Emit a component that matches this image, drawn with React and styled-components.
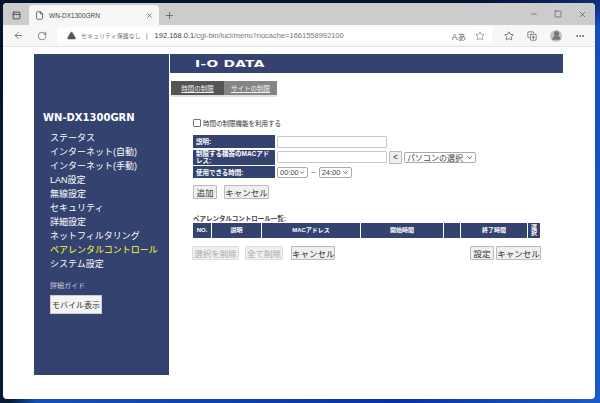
import styled, { createGlobalStyle } from 'styled-components'
import { ArrowLeft, RotateCw, File, Plus, X, Minus, Square, Star, MoreHorizontal, TriangleAlert, ChevronDown, PanelTop, CopyPlus, UserRound } from 'lucide-react'

const Global = createGlobalStyle`
  html, body {
    margin: 0;
    padding: 0;
    width: 600px;
    height: 403px;
    overflow: hidden;
  }
  body {
    font-family: "Liberation Sans", "Noto Sans CJK JP", sans-serif;
    background: linear-gradient(100deg, #071a33 0%, #071a33 12%, #1450b8 16%, #0a2fa8 70%, #1b5cc8 100%);
  }
`;

const Desktop = styled.div`
  width: 600px;
  height: 403px;
  padding: 3px 5px 4px 3px;
  box-sizing: border-box;
  background: linear-gradient(170deg, #04122c 0%, #04122c 16%, transparent 26%);
`;

const Browser = styled.div`
  width: 592px;
  height: 396px;
  border-radius: 4px;
  overflow: hidden;
  background: #fff;
  display: flex;
  flex-direction: column;
`;

const TabStrip = styled.div`
  height: 22px;
  flex-shrink: 0;
  background: #cccccc;
  display: flex;
  align-items: flex-end;
  color: #444;
`;

const TabIcon = styled.div`
  width: 26px;
  height: 20px;
  display: flex;
  align-items: center;
  justify-content: center;
  padding-left: 1px;
  box-sizing: border-box;
`;

const Tab = styled.div`
  width: 130px;
  height: 20px;
  background: #f7f7f7;
  border-radius: 4px 4px 0 0;
  display: flex;
  align-items: center;
  padding: 0 6px;
  box-sizing: border-box;
  gap: 5px;
  font-size: 6.5px;
  color: #444;
`;

const TabTitle = styled.span`
  flex: 1;
`;

const NewTab = styled.div`
  width: 20px;
  height: 20px;
  display: flex;
  align-items: center;
  justify-content: center;
`;

const WindowButtons = styled.div`
  margin-left: auto;
  height: 22px;
  display: flex;
  align-items: center;
  gap: 16px;
  padding-right: 8px;
  color: #555;
`;

const Toolbar = styled.div`
  height: 21px;
  flex-shrink: 0;
  background: #f7f7f7;
  border-bottom: 1px solid #e4e4e4;
  display: flex;
  align-items: center;
  color: #444;
`;

const NavButton = styled.div`
  width: 24px;
  display: flex;
  justify-content: center;
  margin-left: ${props => props.$left || 0}px;
`;

const AddressBar = styled.div`
  width: 133px;
  flex: 1;
  height: 17px;
  margin-left: 3px;
  background: #fff;
  border-radius: 3px;
  display: flex;
  align-items: center;
  padding: 0 7px 0 10px;
  font-size: 7.5px;
  color: #777;
  white-space: nowrap;
`;

const Warning = styled.span`
  font-size: 6px;
  color: #777;
  margin: 0 5px 0 5px;
`;

const Divider = styled.span`
  color: #888;
  margin-right: 7px;
`;

const Host = styled.span`
  color: #444;
`;

const AddressIcons = styled.div`
  margin-left: auto;
  display: flex;
  align-items: center;
  gap: 9px;
  color: #666;
`;

const ReadAloud = styled.span`
  font-size: 8.5px;
  color: #666;
`;

const ToolIcons = styled.div`
  display: flex;
  align-items: center;
  gap: 13px;
  padding: 0 10px 0 12px;
`;

const Avatar = styled.div`
  width: 12px;
  height: 12px;
  border-radius: 50%;
  background: #c4c4c4;
  color: #777;
  display: flex;
  align-items: center;
  justify-content: center;
  overflow: hidden;
`;

const Page = styled.div`
  flex: 1;
  padding: 7px 0 0 31px;
  display: flex;
  align-items: flex-start;
`;

const Sidebar = styled.nav`
  width: 135px;
  height: 321px;
  flex-shrink: 0;
  background: #344270;
  box-sizing: border-box;
  padding: 58px 0 0 9px;
  color: #fff;
`;

const Model = styled.h2`
  margin: 0 0 7px;
  font-family: "DejaVu Sans", sans-serif;
  font-size: 10px;
  line-height: 12px;
  font-weight: bold;
`;

const Menu = styled.ul`
  list-style: none;
  margin: 0;
  padding: 0 0 0 7px;
`;

const MenuItem = styled.li`
  font-size: 9px;
  line-height: 14px;
  white-space: nowrap;
  color: ${props => (props.$active ? '#ffff33' : '#fff')};
`;

const Guide = styled.div`
  margin: 9px 0 0 7px;
  font-size: 7px;
  line-height: 12px;
  color: #c5c9d8;
`;

const MobileButton = styled.button`
  display: block;
  margin: 3px 0 0 7px;
  width: 52px;
  height: 19px;
  padding: 0;
  border: 1px solid #ccc;
  background: #f4f4f4;
  color: #333;
  font-family: inherit;
  font-size: 8px;
`;

const Content = styled.main`
  width: 393px;
  margin-left: 1px;
`;

const Banner = styled.header`
  height: 19px;
  background: #344270;
  padding-left: 25px;
  display: flex;
  align-items: center;
`;

const Logo = styled.span`
  font-family: "DejaVu Sans", sans-serif;
  font-weight: bold;
  font-size: 9.5px;
  letter-spacing: 0.2px;
  color: #fff;
  display: inline-block;
  transform: scaleX(1.45);
  transform-origin: left center;
`;

const Tabs = styled.div`
  margin: 8px 0 0 1px;
  display: flex;
  border-bottom: 2px solid #e2e2e2;
  width: 106px;
`;

const PageTab = styled.a`
  width: 53px;
  height: 14px;
  font-size: 6.5px;
  line-height: 15px;
  text-align: center;
  color: #eee;
  text-decoration: underline;
  background: ${props => (props.$active ? '#555' : '#858585')};
`;

const Body = styled.div`
  padding: 20px 0 0 23px;
  color: #333;
`;

const CheckRow = styled.label`
  display: flex;
  align-items: center;
  height: 12px;
  font-size: 6.5px;
  gap: 2px;
`;

const Check = styled.span`
  width: 6px;
  height: 6px;
  border: 1px solid #777;
  border-radius: 1px;
  background: #fff;
`;

const Form = styled.div`
  margin-top: 6px;
  display: grid;
  grid-template-columns: 82px auto;
  row-gap: 1.5px;
  column-gap: 2px;
  justify-content: start;
`;

const Label = styled.div`
  background: #344270;
  color: #fff;
  font-size: 6.5px;
  font-weight: bold;
  line-height: 7px;
  padding: 0 3px;
  min-height: ${props => props.$h || 13}px;
  display: flex;
  align-items: center;
`;

const Field = styled.div`
  display: flex;
  align-items: center;
  gap: 2px;
  font-size: 8px;
`;

const Input = styled.div`
  width: 110px;
  height: 12px;
  box-sizing: border-box;
  border: 1px solid #c8c8c8;
  border-radius: 1px;
  background: #fff;
`;

const Select = styled.div`
  width: ${props => props.$w}px;
  height: 11px;
  box-sizing: border-box;
  border: 1px solid #aaa;
  border-radius: 2px;
  background: #fff;
  display: flex;
  align-items: center;
  justify-content: space-between;
  padding: 0 2px;
  font-size: ${props => props.$fs || 7.5}px;
  color: #444;
  white-space: nowrap;
`;

const Tilde = styled.span`
  margin: 0 1px;
  color: #555;
`;

const Button = styled.button`
  height: ${props => props.$h || 14}px;
  width: ${props => props.$w}px;
  margin-left: ${props => props.$left || 0}px;
  padding: 0;
  box-sizing: border-box;
  border: 1px solid ${props => (props.disabled ? '#dedede' : '#bbb')};
  border-radius: 1px;
  background: #efefef;
  color: ${props => (props.disabled ? '#aaa' : '#333')};
  font-family: inherit;
  font-size: 8.5px;
  white-space: nowrap;
`;

const ButtonRow = styled.div`
  display: flex;
  margin-top: 6.5px;
`;

const ListTitle = styled.div`
  margin-top: 15px;
  font-size: 6.5px;
  line-height: 9px;
  font-weight: bold;
  color: #444;
`;

const ListHead = styled.div`
  width: 347px;
  height: 15px;
  display: grid;
  grid-template-columns: 18px 49px 98px 82px 16px 66px 12px;
  column-gap: 1px;
`;

const HeadCell = styled.div`
  background: #344270;
  color: #fff;
  font-size: 6px;
  line-height: 6.5px;
  font-weight: bold;
  padding: 0 2px;
  display: flex;
  align-items: center;
  justify-content: center;
  text-align: center;
`;

const ListActions = styled.div`
  width: 349px;
  margin: 8px 0 0 -1px;
  display: flex;
`;

const RightActions = styled.div`
  margin-left: auto;
  display: flex;
  gap: 2px;
`;

const heads = ['NO.', '説明', 'MACアドレス', '開始時間', '', '終了時間', '選択']
const menu = ['ステータス', 'インターネット(自動)', 'インターネット(手動)', 'LAN設定', '無線設定', 'セキュリティ', '詳細設定', 'ネットフィルタリング', 'ペアレンタルコントロール', 'システム設定']

export default function App() {
  return (
    <>
      <Global />
      <Desktop>
        <Browser>
          <TabStrip>
            <TabIcon><PanelTop size={9} strokeWidth={2.4} /></TabIcon>
            <Tab>
              <File size={9} />
              <TabTitle>WN-DX1300GRN</TabTitle>
              <X size={7} strokeWidth={2.2} />
            </Tab>
            <NewTab><Plus size={11} strokeWidth={1.4} /></NewTab>
            <WindowButtons>
              <Minus size={8} />
              <Square size={8} />
              <X size={9} />
            </WindowButtons>
          </TabStrip>
          <Toolbar>
            <NavButton $left={3}><ArrowLeft size={11} strokeWidth={1.5} /></NavButton>
            <NavButton><RotateCw size={10} strokeWidth={1.5} /></NavButton>
            <AddressBar>
              <TriangleAlert size={9} fill="#555" stroke="#555" />
              <Warning>セキュリティ保護なし</Warning>
              <Divider>|</Divider>
              <Host>192.168.0.1</Host>/cgi-bin/luci/menu?nocache=1661558992100
              <AddressIcons>
                <ReadAloud>Aあ</ReadAloud>
                <Star size={10} strokeWidth={1.4} />
              </AddressIcons>
            </AddressBar>
            <ToolIcons>
              <Star size={10} strokeWidth={1.6} />
              <CopyPlus size={10} strokeWidth={1.6} />
              <Avatar><UserRound size={11} fill="#777" /></Avatar>
              <MoreHorizontal size={10} />
            </ToolIcons>
          </Toolbar>
          <Page>
            <Sidebar>
              <Model>WN-DX1300GRN</Model>
              <Menu>
                {menu.map((m, i) => <MenuItem key={m} $active={i === 8}>{m}</MenuItem>)}
              </Menu>
              <Guide>詳細ガイド</Guide>
              <MobileButton>モバイル表示</MobileButton>
            </Sidebar>
            <Content>
              <Banner><Logo>I-O DATA</Logo></Banner>
              <Tabs>
                <PageTab $active>時間の制限</PageTab>
                <PageTab>サイトの制限</PageTab>
              </Tabs>
              <Body>
                <CheckRow><Check />時間の制限機能を利用する</CheckRow>
                <Form>
                  <Label>説明:</Label>
                  <Field><Input /></Field>
                  <Label $h={15}>制限する機器のMACアドレス:</Label>
                  <Field>
                    <Input />
                    <Button $w={13} $h={13}>&lt;</Button>
                    <Select $w={72} $fs={8}>パソコンの選択<ChevronDown size={7} strokeWidth={3} /></Select>
                  </Field>
                  <Label $h={12}>使用できる時間:</Label>
                  <Field>
                    <Select $w={31}>00:00<ChevronDown size={7} strokeWidth={3} /></Select>
                    <Tilde>~</Tilde>
                    <Select $w={33}>24:00<ChevronDown size={7} strokeWidth={3} /></Select>
                  </Field>
                </Form>
                <ButtonRow>
                  <Button $w={24}>追加</Button>
                  <Button $w={45} $left={7}>キャンセル</Button>
                </ButtonRow>
                <ListTitle>ペアレンタルコントロール一覧:</ListTitle>
                <ListHead>
                  {heads.map((h, i) => <HeadCell key={i}>{h}</HeadCell>)}
                </ListHead>
                <ListActions>
                  <Button $w={47} disabled>選択を削除</Button>
                  <Button $w={38} $left={6} disabled>全て削除</Button>
                  <Button $w={44} $left={8}>キャンセル</Button>
                  <RightActions>
                    <Button $w={24}>設定</Button>
                    <Button $w={45}>キャンセル</Button>
                  </RightActions>
                </ListActions>
              </Body>
            </Content>
          </Page>
        </Browser>
      </Desktop>
    </>
  )
}
